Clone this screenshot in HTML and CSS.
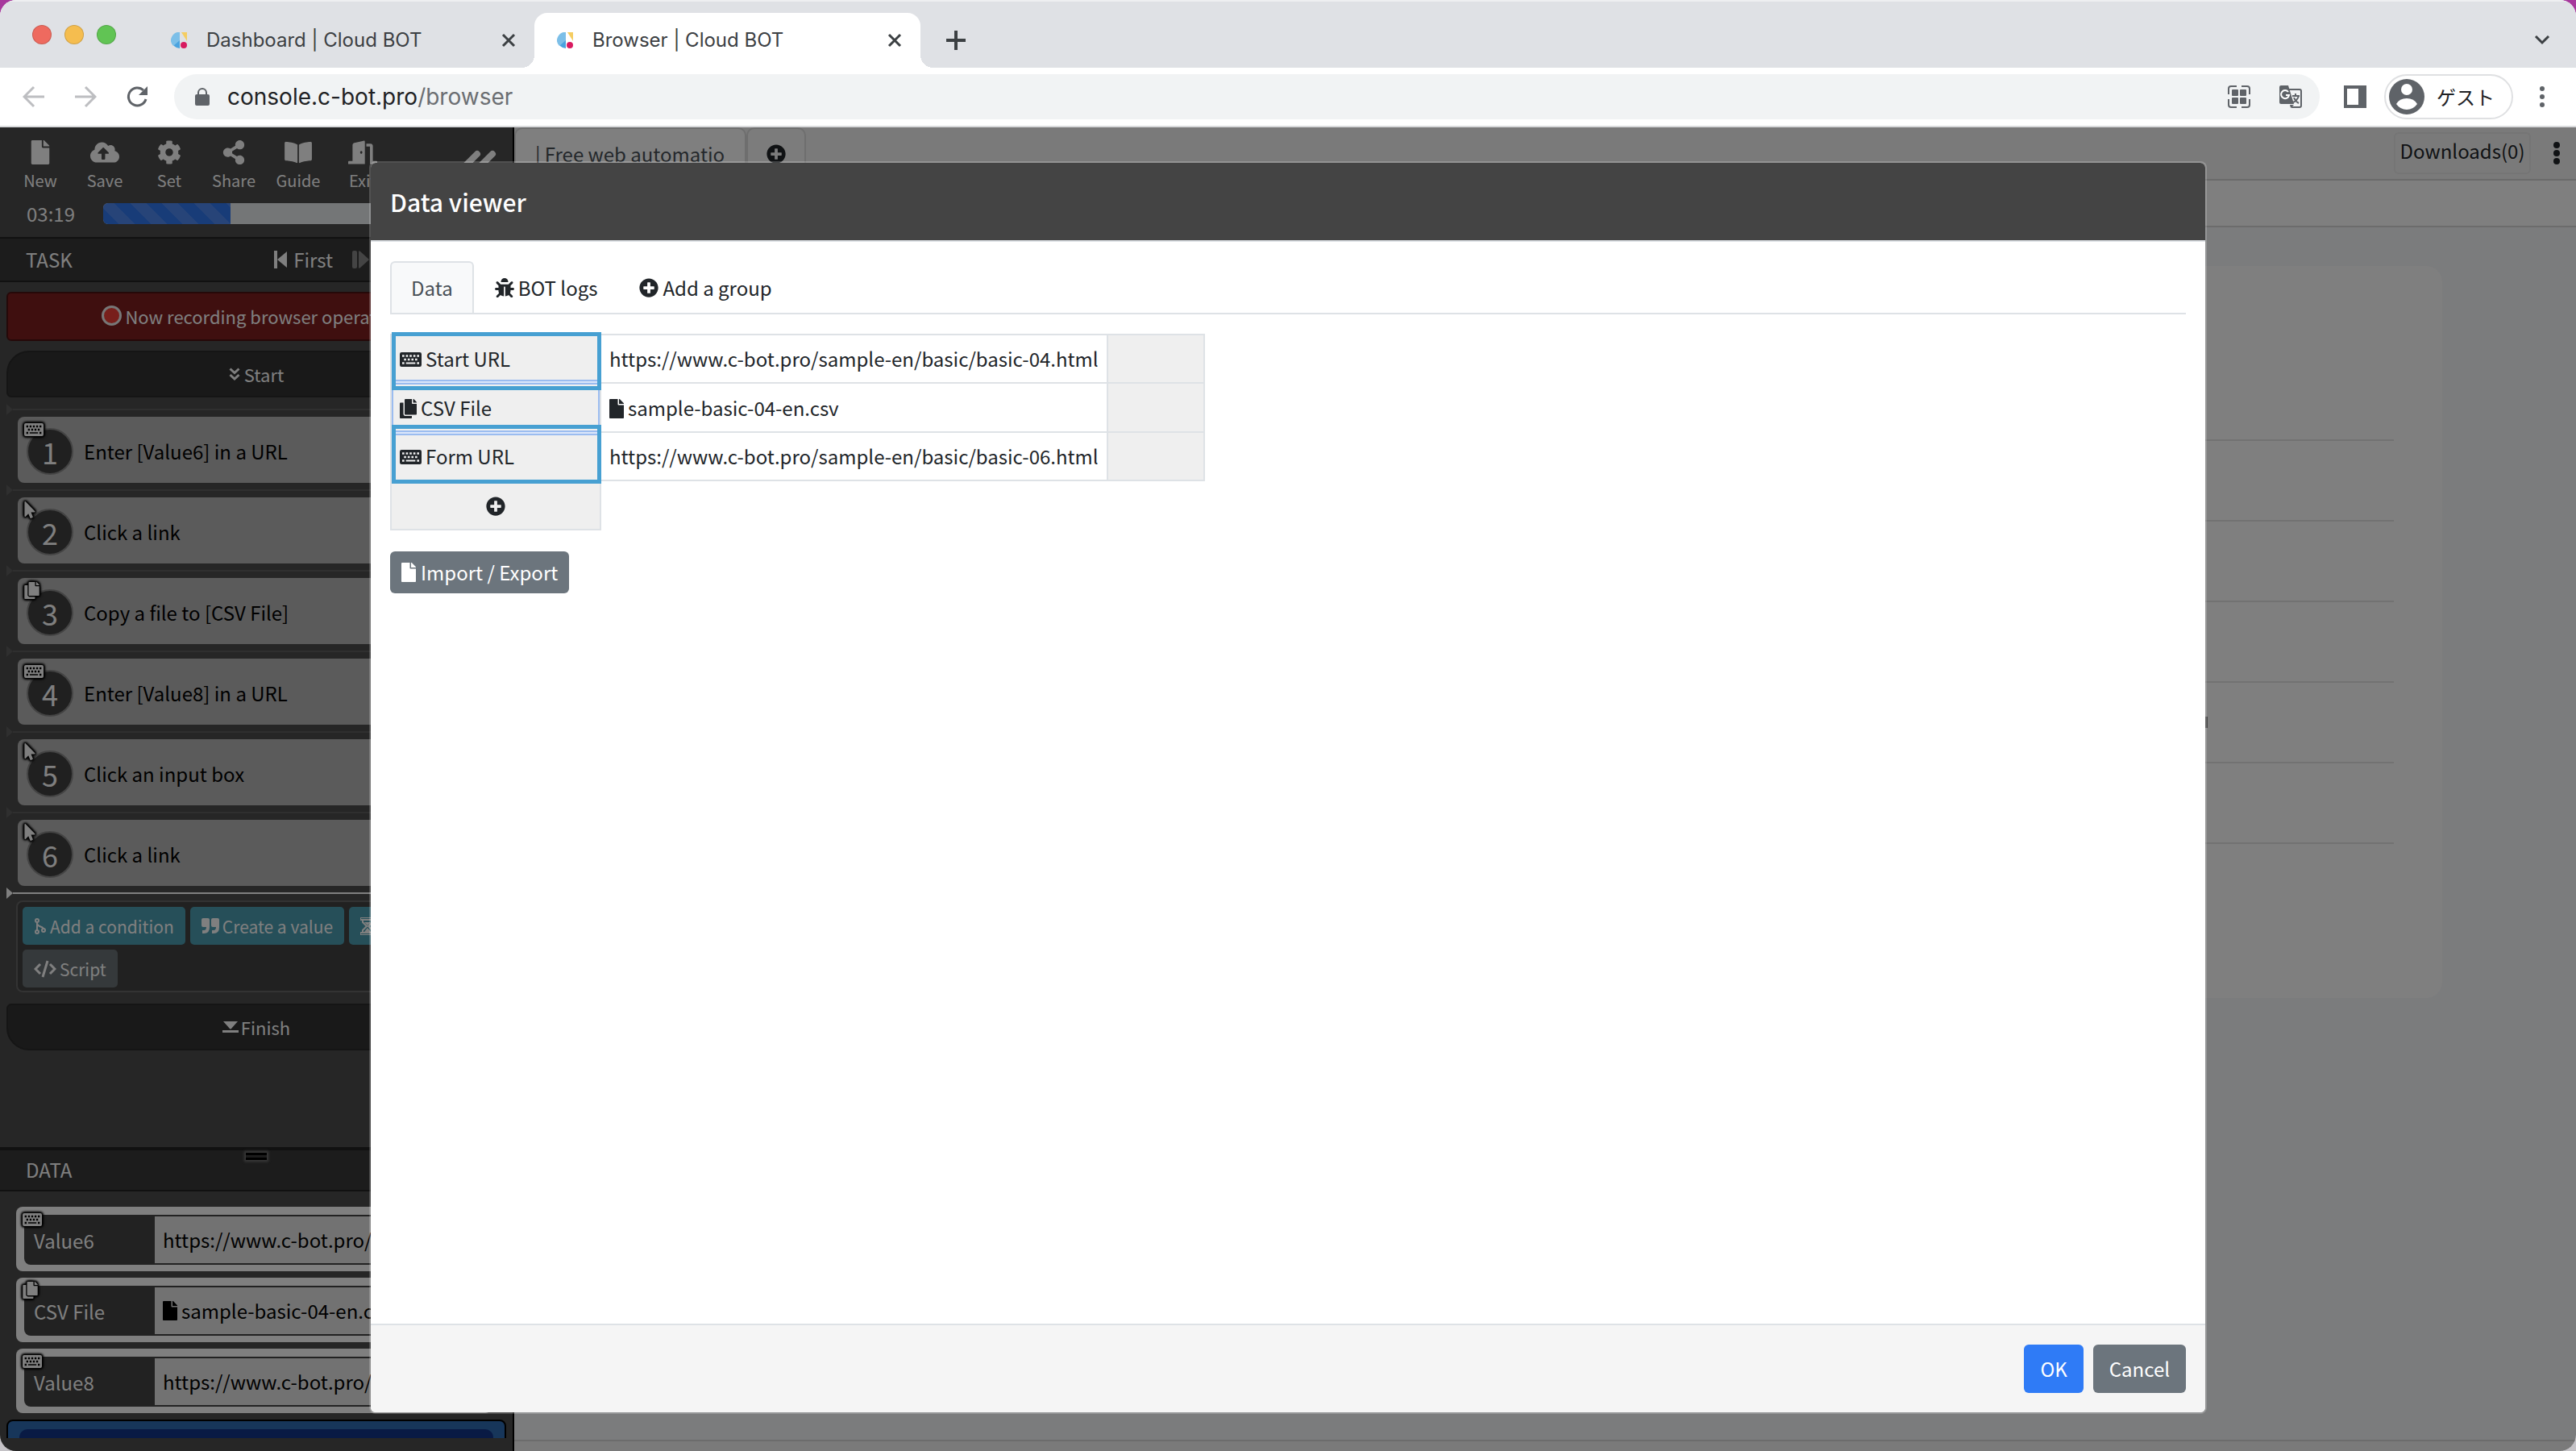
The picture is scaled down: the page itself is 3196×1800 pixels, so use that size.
FILE: index.html
```html
<!DOCTYPE html>
<html lang="en">
<head>
    <meta charset="UTF-8">
    <meta name="viewport" content="width=device-width, initial-scale=1.0">
    <title>Browser | Cloud BOT</title>
    <link rel="stylesheet" href="styles.css">
</head>
<body>
    <!-- Icon set -->
    <svg class="defs" aria-hidden="true">
        <symbol id="i-file" viewBox="0 0 384 512"><path d="M224 136V0H24C10.700 0 0 10.700 0 24v464c0 13.300 10.700 24 24 24h336c13.300 0 24-10.700 24-24V160H248c-13.200 0-24-10.800-24-24zm160-14.100v6.100H256V0h6.100c6.400 0 12.500 2.500 17 7l97.900 98c4.500 4.500 7 10.600 7 16.900z"/></symbol>
        <symbol id="i-copy" viewBox="0 0 448 512"><path d="M320 448v40c0 13.255-10.745 24-24 24H24c-13.255 0-24-10.745-24-24V120c0-13.255 10.745-24 24-24h72v296c0 30.879 25.121 56 56 56h168zm0-344V0H152c-13.255 0-24 10.745-24 24v368c0 13.255 10.745 24 24 24h272c13.255 0 24-10.745 24-24V128H344c-13.200 0-24-10.800-24-24zm120.971-31.029L375.029 7.029A24 24 0 0 0 358.059 0H352v96h96v-6.059a24 24 0 0 0-7.029-16.970z"/></symbol>
        <symbol id="i-keyboard" viewBox="0 0 576 384"><path fill-rule="evenodd" d="M48 0h480a48 48 0 0 1 48 48v288a48 48 0 0 1-48 48H48a48 48 0 0 1-48-48V48A48 48 0 0 1 48 0zM64 68v56h56V68zM162 68v56h56V68zM260 68v56h56V68zM358 68v56h56V68zM456 68v56h56V68zM112 164v56h56v-56zM210 164v56h56v-56zM308 164v56h56v-56zM406 164v56h56v-56zM64 260v56h56v-56zM164 268v40h248v-40zM456 260v56h56v-56z"/></symbol>
        <symbol id="i-pointer" viewBox="0 0 320 512"><path d="M302.189 329.126H196.105l55.831 135.993c3.889 9.428-.555 19.999-9.444 23.999l-49.165 21.427c-9.165 4-19.443-.571-23.332-9.714l-53.053-129.136-86.664 89.138C18.729 472.710 0 463.554 0 447.977V18.299C0 1.899 19.921-6.096 30.277 5.443l284.412 292.542c11.472 11.179 3.007 31.141-12.500 31.141z"/></symbol>
        <symbol id="i-plus" viewBox="0 0 512 512"><path d="M256 8C119 8 8 119 8 256s111 248 248 248 248-111 248-248S393 8 256 8zm144 276c0 6.600-5.400 12-12 12h-92v92c0 6.600-5.400 12-12 12h-56c-6.600 0-12-5.400-12-12v-92h-92c-6.600 0-12-5.400-12-12v-56c0-6.600 5.400-12 12-12h92v-92c0-6.600 5.400-12 12-12h56c6.600 0 12 5.400 12 12v92h92c6.600 0 12 5.400 12 12v56z"/></symbol>
        <symbol id="i-cloud" viewBox="0 0 640 512"><path d="M537.600 226.600c4.100-10.700 6.400-22.400 6.400-34.600 0-53-43-96-96-96-19.700 0-38.100 6-53.300 16.200C367 64.200 315.300 32 256 32c-88.400 0-160 71.600-160 160 0 2.700.1 5.400.2 8.100C40.200 219.800 0 273.200 0 336c0 79.500 64.500 144 144 144h368c70.700 0 128-57.300 128-128 0-61.900-44-113.600-102.400-125.400zM393.400 288H328v112c0 8.800-7.200 16-16 16h-48c-8.800 0-16-7.200-16-16V288h-65.400c-14.300 0-21.400-17.200-11.300-27.300l105.400-105.400c6.200-6.200 16.400-6.200 22.600 0l105.400 105.400c10.100 10.100 2.900 27.300-11.300 27.300z"/></symbol>
        <symbol id="i-cog" viewBox="0 0 512 512"><path d="M487.400 315.700l-42.600-24.600c4.300-23.200 4.300-47 0-70.200l42.600-24.600c4.900-2.800 7.100-8.600 5.500-14-11.100-35.600-30-67.800-54.700-94.600-3.800-4.100-10-5.100-14.800-2.300L380.800 110c-17.900-15.400-38.500-27.300-60.800-35.100V25.800c0-5.600-3.900-10.500-9.400-11.700-36.700-8.200-74.300-7.800-109.200 0-5.500 1.200-9.400 6.100-9.400 11.700V75c-22.200 7.900-42.800 19.800-60.800 35.100L88.700 85.500c-4.900-2.800-11-1.900-14.800 2.300-24.700 26.700-43.600 58.900-54.700 94.600-1.700 5.400.6 11.200 5.500 14L67.300 221c-4.300 23.200-4.300 47 0 70.200l-42.600 24.600c-4.900 2.800-7.100 8.600-5.500 14 11.100 35.600 30 67.800 54.700 94.600 3.800 4.100 10 5.100 14.800 2.300l42.600-24.600c17.900 15.400 38.500 27.300 60.800 35.100v49.200c0 5.600 3.900 10.500 9.400 11.700 36.700 8.200 74.300 7.800 109.200 0 5.500-1.200 9.400-6.100 9.400-11.700v-49.200c22.200-7.900 42.800-19.800 60.800-35.100l42.600 24.600c4.900 2.800 11 1.900 14.800-2.300 24.700-26.700 43.600-58.900 54.700-94.600 1.500-5.500-.7-11.300-5.600-14.100zM256 336c-44.100 0-80-35.900-80-80s35.900-80 80-80 80 35.900 80 80-35.900 80-80 80z"/></symbol>
        <symbol id="i-share" viewBox="0 0 448 512"><path d="M352 320c-22.608 0-43.387 7.819-59.790 20.895l-102.486-64.054a96.551 96.551 0 0 0 0-41.683l102.486-64.054C308.613 184.181 329.392 192 352 192c53.019 0 96-42.981 96-96S405.019 0 352 0s-96 42.981-96 96c0 7.158.79 14.130 2.276 20.841L155.790 180.895C139.387 167.819 118.608 160 96 160c-53.019 0-96 42.981-96 96s42.981 96 96 96c22.608 0 43.387-7.819 59.790-20.895l102.486 64.054A96.301 96.301 0 0 0 256 416c0 53.019 42.981 96 96 96s96-42.981 96-96-42.981-96-96-96z"/></symbol>
        <symbol id="i-book" viewBox="0 0 576 512"><path d="M542 32c-55 3-164 14-232 56-5 3-7 8-7 13v364c0 12 12 19 23 14 70-35 171-45 221-47 17-1 30-15 30-31V63c0-18-16-32-35-31zM267 88C199 46 90 35 35 32 16 31 0 45 0 63v338c0 16 13 30 30 31 50 2 151 12 221 47 10 5 22-2 22-14V101c0-5-2-10-6-13z"/></symbol>
        <symbol id="i-door" viewBox="0 0 640 512"><path fill-rule="evenodd" d="M16 448h80V95c0-25 18-43 40-49L338 1c16-4 30 7 30 22v489H0v-48c0-9 7-16 16-16zm272-224c-13 0-24 14-24 32s11 32 24 32 24-14 24-32-11-32-24-32zM400 64h96c26 0 48 22 48 49v335h80c9 0 16 7 16 16v48H480V128h-80z"/></symbol>
        <symbol id="i-bug" viewBox="0 0 512 512"><path d="M256 0a96 96 0 0 1 96 96v8H160v-8a96 96 0 0 1 96-96zM512 290c-1 17-15 30-32 30h-64v16c0 22-5 44-14 63l64 64c12 12 12 33 0 45s-33 12-45 0l-58-58c-25 19-56 30-90 30h1V236c0-7-5-12-12-12h-12c-7 0-12 5-12 12v244c-34 0-65-11-90-30l-58 58c-12 12-33 12-45 0s-12-33 0-45l64-64c-9-19-14-41-14-63v-16H32c-17 0-31-13-32-30-1-18 14-34 32-34h64v-59l-55-55c-12-12-12-33 0-45s33-12 45 0l68 67h204l68-67c12-12 33-12 45 0s12 33 0 45l-55 55v59h64c18 0 33 16 32 34z"/></symbol>
        <symbol id="i-angles-down" viewBox="0 0 28 34"><path d="M3 4l11 10L25 4M3 19l11 10 11-10" fill="none" stroke="currentColor" stroke-width="6"/></symbol>
        <symbol id="i-angles-left" viewBox="0 0 46 40"><path d="M22 5L7 20l15 15M41 5L26 20l15 15" fill="none" stroke="currentColor" stroke-width="8" stroke-linecap="round"/></symbol>
        <symbol id="i-first" viewBox="0 0 16 22"><path d="M0 0h4v22H0zM16 1v20L4 11z"/></symbol>
        <symbol id="i-next" viewBox="0 0 21 22"><rect width="6" height="22" rx="2"/><path d="M8 1c0-1 1-1 2 0l10 9c1 1 1 1 0 2l-10 9c-1 1-2 1-2 0z"/></symbol>
        <symbol id="i-branch" viewBox="0 0 16 22"><path d="M4 6v10M4 7c0 6 8 3 8 8" fill="none" stroke="currentColor" stroke-width="2"/><g fill="none" stroke="currentColor" stroke-width="2"><circle cx="4" cy="4" r="2"/><circle cx="4" cy="18" r="2"/><circle cx="12" cy="16" r="2"/></g></symbol>
        <symbol id="i-quote" viewBox="0 0 22 20"><path d="M2 0h6q2 0 2 2v9q0 8-7 8H1v-4h2q3 0 3-4H2q-2 0-2-2V2q0-2 2-2zM14 0h6q2 0 2 2v9q0 8-7 8h-2v-4h2q3 0 3-4h-4q-2 0-2-2V2q0-2 2-2z"/></symbol>
        <symbol id="i-hourglass" viewBox="0 0 18 22"><path d="M0 0h18v3H0zM0 19h18v3H0zM3 3v3l5 5-5 5v3M15 3v3l-5 5 5 5v3" fill="none" stroke="currentColor" stroke-width="2"/><path d="M5 18l4-5 4 5zM5 6h8l-4 4z"/></symbol>
        <symbol id="i-code" viewBox="0 0 28 22"><path d="M8 5L2 11l6 6M20 5l6 6-6 6M17 1l-6 20" fill="none" stroke="currentColor" stroke-width="3"/></symbol>
        <symbol id="i-finish" viewBox="0 0 20 14"><path d="M1 0h18l-8 9q-1 1-2 0zM0 11h20v3H0z"/></symbol>
        <symbol id="i-favicon" viewBox="0 0 20 20"><path d="M11 0v20A10 10 0 0 1 11 0z" fill="#4aa3df"/><path d="M11 0v10L3 17A10 10 0 0 1 11 0z" fill="#7cbfe8"/><path d="M13 0h7v11z" fill="#f5cd62"/><circle cx="16" cy="16" r="4" fill="#d81b60"/></symbol>
        <symbol id="i-close" viewBox="0 0 18 18"><path d="M2 2l14 14M16 2L2 16" stroke="currentColor" stroke-width="3"/></symbol>
    </svg>

    <div class="window">
        <!-- Tab strip -->
        <div class="tab-strip">
            <div class="lights"><span class="light red"></span><span class="light yellow"></span><span class="light green"></span></div>
            <div class="chrome-tab">
                <svg class="favicon"><use href="#i-favicon"/></svg>
                <span>Dashboard | Cloud BOT</span>
                <button class="tab-close" aria-label="Close tab"><svg><use href="#i-close"/></svg></button>
            </div>
            <div class="chrome-tab active">
                <svg class="favicon"><use href="#i-favicon"/></svg>
                <span>Browser | Cloud BOT</span>
                <button class="tab-close" aria-label="Close tab"><svg><use href="#i-close"/></svg></button>
            </div>
            <button class="new-tab" aria-label="New tab"><svg viewBox="0 0 24 24"><path d="M12 0v24M0 12h24" stroke="currentColor" stroke-width="4"/></svg></button>
            <button class="tab-search" aria-label="Search tabs"><svg viewBox="0 0 20 12"><path d="M2 1l8 8 8-8" fill="none" stroke="currentColor" stroke-width="3"/></svg></button>
        </div>

        <!-- Address bar -->
        <div class="toolbar">
            <button class="nav-btn off" aria-label="Back"><svg viewBox="0 0 28 28"><path d="M27 14H3M14 2L2 14l12 12" fill="none" stroke="currentColor" stroke-width="3"/></svg></button>
            <button class="nav-btn off" aria-label="Forward"><svg viewBox="0 0 28 28"><path d="M1 14h24M14 2l12 12-12 12" fill="none" stroke="currentColor" stroke-width="3"/></svg></button>
            <button class="nav-btn" aria-label="Reload"><svg viewBox="0 0 28 28"><path d="M25 17A11 11 0 1 1 22 6" fill="none" stroke="currentColor" stroke-width="3"/><path d="M27 1v11H16z"/></svg></button>
            <div class="omnibox">
                <svg class="lock" viewBox="0 0 18 22"><rect y="8" width="18" height="14" rx="2"/><path d="M4 9V6a5 5 0 0 1 10 0v3" fill="none" stroke="currentColor" stroke-width="2"/></svg>
                <span class="url">console.c-bot.pro<span class="path">/browser</span></span>
                <svg class="tool" viewBox="0 0 28 28"><path d="M1 11V4q0-3 3-3h7M17 1h7q3 0 3 3v7M27 17v7q0 3-3 3h-7M11 27H4q-3 0-3-3v-7" fill="none" stroke="currentColor" stroke-width="2"/><rect x="5" y="5" width="8" height="8" rx="1"/><rect x="15" y="5" width="8" height="8" rx="1"/><rect x="5" y="15" width="8" height="8" rx="1"/><rect x="15" y="15" width="8" height="8" rx="1"/></svg>
                <svg class="tool" viewBox="0 0 28 28"><path d="M12 5h13q2 0 2 2v18q0 2-2 2H15" fill="none" stroke="currentColor" stroke-width="2"/><path d="M2 0h9l7 23H2q-2 0-2-2V2q0-2 2-2zM13 24h5l-4 4z"/><path d="M11 8a5 5 0 1 0 1 4H8" fill="none" stroke="#fff" stroke-width="2"/><path d="M16 13h9M20 10v3M24 13q-2 6-7 8M18 15q2 5 6 7" fill="none" stroke="currentColor" stroke-width="2"/></svg>
            </div>
            <button class="side-btn" aria-label="Side panel"><svg viewBox="0 0 28 28"><path fill-rule="evenodd" d="M0 0h28v28H0zM4 4v20h14V4z"/></svg></button>
            <button class="profile">
                <svg viewBox="0 0 44 44"><circle cx="22" cy="22" r="22"/><circle cx="22" cy="13" r="7" fill="#fff"/><path d="M9 31q4-7 13-7t13 7q-5 7-13 7T9 31z" fill="#fff"/></svg>
                <span>ゲスト</span>
            </button>
            <button class="kebab" aria-label="Menu"><svg viewBox="0 0 8 28"><circle cx="4" cy="4" r="3"/><circle cx="4" cy="14" r="3"/><circle cx="4" cy="24" r="3"/></svg></button>
        </div>

        <div class="app">
            <!-- BOT editor -->
            <aside class="sidebar">
                <div class="menu">
                    <div class="menu-row">
                        <button class="menu-item"><svg><use href="#i-file"/></svg>New</button>
                        <button class="menu-item"><svg><use href="#i-cloud"/></svg>Save</button>
                        <button class="menu-item"><svg><use href="#i-cog"/></svg>Set</button>
                        <button class="menu-item"><svg><use href="#i-share"/></svg>Share</button>
                        <button class="menu-item"><svg><use href="#i-book"/></svg>Guide</button>
                        <button class="menu-item"><svg><use href="#i-door"/></svg>Exit</button>
                        <button class="collapse" aria-label="Collapse"><svg><use href="#i-angles-left"/></svg></button>
                    </div>
                    <div class="time-row">
                        <span>03:19</span>
                        <div class="progress"><div class="progress-bar" style="width: 32.5%"></div></div>
                    </div>
                </div>

                <div class="panel-head">
                    <h2>TASK</h2>
                    <button class="first"><svg><use href="#i-first"/></svg>First</button>
                    <button class="next" aria-label="Next"><svg><use href="#i-next"/></svg></button>
                </div>
                <div class="task">
                    <div class="recording"><span class="rec-dot"></span>Now recording browser operations</div>
                    <div class="cap start"><svg class="i-14"><use href="#i-angles-down"/></svg>Start</div>
                    <ol class="steps">
                        <li><div class="sep"></div><div class="step"><svg class="badge kb"><use href="#i-keyboard"/></svg><span class="num">1</span>Enter [Value6] in a URL</div></li>
                        <li><div class="sep"></div><div class="step"><svg class="badge ptr"><use href="#i-pointer"/></svg><span class="num">2</span>Click a link</div></li>
                        <li><div class="sep"></div><div class="step"><svg class="badge cp"><use href="#i-copy"/></svg><span class="num">3</span>Copy a file to [CSV File]</div></li>
                        <li><div class="sep"></div><div class="step"><svg class="badge kb"><use href="#i-keyboard"/></svg><span class="num">4</span>Enter [Value8] in a URL</div></li>
                        <li><div class="sep"></div><div class="step"><svg class="badge ptr"><use href="#i-pointer"/></svg><span class="num">5</span>Click an input box</div></li>
                        <li><div class="sep"></div><div class="step"><svg class="badge ptr"><use href="#i-pointer"/></svg><span class="num">6</span>Click a link</div></li>
                    </ol>
                    <div class="sep current"></div>
                    <div class="add-box">
                        <button class="btn-add"><svg class="i-16"><use href="#i-branch"/></svg>Add a condition</button>
                        <button class="btn-add"><svg class="i-22"><use href="#i-quote"/></svg>Create a value</button>
                        <button class="btn-add"><svg class="i-18"><use href="#i-hourglass"/></svg>Wait</button>
                        <button class="btn-add script"><svg class="i-28"><use href="#i-code"/></svg>Script</button>
                    </div>
                    <div class="cap finish"><svg class="i-20"><use href="#i-finish"/></svg>Finish</div>
                </div>

                <div class="data">
                    <div class="panel-head"><h2>DATA</h2><span class="handle"></span></div>
                    <div class="data-list">
                        <div class="datum"><svg class="badge kb"><use href="#i-keyboard"/></svg><label for="value6">Value6</label><input id="value6" value="https://www.c-bot.pro/sample-en/basic/basic-04.html"></div>
                        <div class="datum"><svg class="badge cp"><use href="#i-copy"/></svg><span class="datum-name">CSV File</span><span class="datum-file"><svg class="i-file"><use href="#i-file"/></svg>sample-basic-04-en.csv</span></div>
                        <div class="datum"><svg class="badge kb"><use href="#i-keyboard"/></svg><label for="value8">Value8</label><input id="value8" value="https://www.c-bot.pro/sample-en/basic/basic-06.html"></div>
                        <div class="output"><div class="output-inner"></div></div>
                    </div>
                </div>
            </aside>

            <!-- Remote browser -->
            <main class="remote">
                <div class="remote-tabs">
                    <div class="remote-tab">| Free web automatio</div>
                    <button class="remote-tab add" aria-label="New tab"><svg class="i-24"><use href="#i-plus"/></svg></button>
                    <button class="downloads">Downloads(0)</button>
                    <button class="more" aria-label="More"><svg viewBox="0 0 8 28"><circle cx="4" cy="4" r="4"/><circle cx="4" cy="14" r="4"/><circle cx="4" cy="24" r="4"/></svg></button>
                </div>
                <div class="remote-bar"></div>
                <div class="remote-page">
                    <div class="card">
                        <div class="card-row head"></div>
                        <div class="card-row"></div>
                        <div class="card-row"></div>
                        <div class="card-row"></div>
                        <div class="card-row"><span class="mark"></span></div>
                        <div class="card-row"></div>
                    </div>
                </div>
                <div class="remote-foot"></div>
            </main>

            <!-- Data viewer -->
            <div class="backdrop">
                <div class="modal" role="dialog" aria-labelledby="modal-title">
                    <header class="modal-head"><h1 id="modal-title">Data viewer</h1></header>
                    <div class="modal-body">
                        <div class="tabs" role="tablist">
                            <button class="tab active" role="tab" aria-selected="true">Data</button>
                            <button class="tab" role="tab"><svg class="i-24"><use href="#i-bug"/></svg>BOT logs</button>
                            <button class="tab" role="tab"><svg class="i-24"><use href="#i-plus"/></svg>Add a group</button>
                        </div>
                        <table class="data-table">
                            <tr>
                                <th scope="row" class="marked"><svg class="i-kb"><use href="#i-keyboard"/></svg>Start URL</th>
                                <td>https://www.c-bot.pro/sample-en/basic/basic-04.html</td>
                                <td class="blank"></td>
                            </tr>
                            <tr>
                                <th scope="row" class="selected"><svg class="i-copy"><use href="#i-copy"/></svg>CSV File</th>
                                <td><svg class="i-file"><use href="#i-file"/></svg>sample-basic-04-en.csv</td>
                                <td class="blank"></td>
                            </tr>
                            <tr>
                                <th scope="row" class="marked"><svg class="i-kb"><use href="#i-keyboard"/></svg>Form URL</th>
                                <td>https://www.c-bot.pro/sample-en/basic/basic-06.html</td>
                                <td class="blank"></td>
                            </tr>
                            <tr>
                                <th class="add-row"><button aria-label="Add"><svg class="i-24"><use href="#i-plus"/></svg></button></th>
                            </tr>
                        </table>
                        <button class="btn btn-sm"><svg class="i-file"><use href="#i-file"/></svg>Import / Export</button>
                    </div>
                    <footer class="modal-foot">
                        <button class="btn btn-primary">OK</button>
                        <button class="btn">Cancel</button>
                    </footer>
                </div>
            </div>
        </div>
    </div>
</body>
</html>
```

FILE: styles.css
```css
* {
    box-sizing: border-box;
}
body {
    margin: 0;
    height: 100vh;
    background: linear-gradient(#a6389c, #c4c2c6);
    font-family: "Noto Sans CJK JP", "Noto Sans", sans-serif;
    font-size: 24px;
    line-height: 36px;
    color: #212529;
}
h1, h2, ol {
    margin: 0;
    padding: 0;
    font-weight: 400;
}
button {
    padding: 0;
    border: none;
    background: none;
    color: inherit;
    font: inherit;
    cursor: pointer;
}
svg {
    display: block;
    flex: none;
    fill: currentColor;
}
.defs {
    position: absolute;
    width: 0;
    height: 0;
}
.i-14 { width: 14px; height: 18px; }
.i-16 { width: 16px; height: 22px; }
.i-18 { width: 18px; height: 22px; }
.i-20 { width: 20px; height: 14px; }
.i-22 { width: 22px; height: 20px; }
.i-24 { width: 24px; height: 24px; }
.i-28 { width: 28px; height: 22px; }
.i-kb { width: 27px; height: 18px; }
.i-copy { width: 21px; height: 24px; }
.i-file { width: 18px; height: 24px; }

.window {
    display: flex;
    flex-direction: column;
    height: 100%;
    border-radius: 20px;
    overflow: hidden;
    background: #fff;
}

/* Tab strip */
.tab-strip {
    display: flex;
    align-items: flex-end;
    height: 84px;
    flex: none;
    padding: 0 32px 0 40px;
    border-top: 2px solid #eeeff1;
    background: #dfe1e5;
    color: #3c4043;
    font-family: Inter, sans-serif;
    font-size: 24px;
}
.lights {
    display: flex;
    gap: 16px;
    width: 144px;
    padding-bottom: 29px;
}
.light {
    width: 24px;
    height: 24px;
    border-radius: 50%;
    border: 1px solid rgba(0, 0, 0, .15);
}
.red { background: #ee6a5f; }
.yellow { background: #f5bd4f; }
.green { background: #61c454; }
.chrome-tab {
    position: relative;
    display: flex;
    align-items: center;
    width: 479px;
    height: 68px;
    padding: 0 23px 0 28px;
    border-radius: 16px 16px 0 0;
}
.chrome-tab span {
    flex: 1;
}
.chrome-tab.active {
    background: #fff;
}
.chrome-tab.active::before,
.chrome-tab.active::after {
    content: "";
    position: absolute;
    bottom: 0;
    width: 16px;
    height: 16px;
}
.chrome-tab.active::before {
    right: 100%;
    background: radial-gradient(circle at 0 0, transparent 16px, #fff 16px);
}
.chrome-tab.active::after {
    left: 100%;
    background: radial-gradient(circle at 100% 0, transparent 16px, #fff 16px);
}
.favicon {
    width: 20px;
    height: 20px;
    margin-right: 24px;
}
.tab-close svg {
    width: 18px;
    height: 18px;
}
.new-tab {
    margin: 0 auto 22px 32px;
}
.new-tab svg {
    width: 24px;
    height: 24px;
}
.tab-search {
    margin-bottom: 28px;
}
.tab-search svg {
    width: 20px;
    height: 12px;
}

/* Address bar */
.toolbar {
    display: flex;
    align-items: center;
    height: 74px;
    flex: none;
    padding: 0 38px 0 28px;
    border-bottom: 2px solid #d9dadc;
    color: #5f6368;
}
.nav-btn {
    margin-right: 36px;
}
.nav-btn svg, .side-btn svg, .tool {
    width: 28px;
    height: 28px;
}
.nav-btn.off {
    color: #bdbec1;
}
.omnibox {
    display: flex;
    align-items: center;
    flex: 1;
    height: 56px;
    margin-left: -4px;
    padding: 0 22px 0 26px;
    border-radius: 28px;
    background: #f1f3f4;
}
.lock {
    width: 18px;
    height: 22px;
    margin-right: 22px;
}
.url {
    flex: 1;
    color: #202124;
    font-family: Inter, sans-serif;
    font-size: 28px;
}
.path {
    color: #6b6e72;
}
.tool + .tool {
    margin-left: 36px;
}
.side-btn {
    margin: 0 22px 0 30px;
}
.profile {
    display: flex;
    align-items: center;
    gap: 15px;
    width: 160px;
    height: 56px;
    padding-left: 4px;
    border: 2px solid #dfe0e2;
    border-radius: 28px;
}
.profile svg {
    width: 44px;
    height: 44px;
}
.profile span {
    color: #202124;
}
.kebab {
    margin-left: 32px;
}
.kebab svg, .more svg {
    width: 8px;
    height: 28px;
}

.app {
    position: relative;
    display: flex;
    flex: 1;
    min-height: 0;
}

/* BOT editor */
.sidebar {
    display: flex;
    flex-direction: column;
    width: 638px;
    flex: none;
    border-right: 2px solid #000;
    background: #4c4c4c;
    color: #fff;
}
.menu {
    padding: 16px 8px 16px 10px;
    border-bottom: 2px solid #222;
}
.menu-row {
    display: flex;
}
.menu-item {
    display: flex;
    flex-direction: column;
    align-items: center;
    gap: 6px;
    width: 80px;
    font-size: 20px;
    line-height: 28px;
}
.menu-item svg {
    width: 36px;
    height: 30px;
}
.collapse {
    align-self: flex-start;
    margin: 12px 12px 0 auto;
}
.collapse svg {
    width: 46px;
    height: 40px;
}
.time-row {
    display: flex;
    align-items: center;
    height: 26px;
    margin-top: 14px;
    padding-left: 23px;
}
.time-row span {
    width: 95px;
}
.progress {
    flex: 1;
    height: 26px;
    margin-right: 14px;
    border-radius: 6px;
    overflow: hidden;
    background: #e9ecef;
}
.progress-bar {
    height: 100%;
    background: repeating-linear-gradient(45deg, #3078f0 0 14px, #4e88f0 14px 28px);
}
.panel-head {
    position: relative;
    display: flex;
    align-items: center;
    height: 54px;
    flex: none;
    padding: 0 8px 0 32px;
    border-bottom: 2px solid #222;
    background: #383838;
}
.panel-head h2 {
    font-size: 24px;
}
.first {
    display: flex;
    align-items: center;
    gap: 8px;
    margin: 0 24px 0 auto;
}
.first svg {
    width: 16px;
    height: 22px;
}
.next {
    margin-right: 170px;
    color: #888;
}
.next svg {
    width: 21px;
    height: 22px;
}
.task {
    flex: 1;
    min-height: 0;
    padding: 12px 8px;
    overflow: hidden;
}
.recording {
    display: flex;
    align-items: center;
    justify-content: center;
    gap: 4px;
    height: 61px;
    margin-bottom: 12px;
    padding-bottom: 2px;
    border: 2px solid #4a1212;
    border-radius: 6px;
    background: #7e1e1e;
    font-size: 22px;
}
.rec-dot {
    width: 25px;
    height: 25px;
    border: 3px solid #eee;
    border-radius: 50%;
    background: #f03e36;
}
.cap {
    display: flex;
    align-items: center;
    justify-content: center;
    gap: 5px;
    height: 58px;
    border: 2px solid #2a2a2a;
    background: #323232;
    font-size: 22px;
}
.start {
    margin-bottom: 6px;
    border-radius: 28px 28px 6px 6px;
}
.finish {
    margin-top: 14px;
    gap: 3px;
    border-radius: 6px 6px 28px 28px;
}
.steps {
    list-style: none;
}
.sep {
    display: flex;
    align-items: center;
    height: 18px;
    color: #5e5e5e;
}
.sep::before {
    content: "";
    border: 7px solid transparent;
    border-left: 8px solid;
    border-right: 0;
}
.sep::after {
    content: "";
    flex: 1;
    height: 2px;
    background: currentColor;
}
.sep.current {
    color: #fff;
}
.step {
    position: relative;
    display: flex;
    align-items: center;
    gap: 13px;
    height: 82px;
    margin: 0 14px;
    padding: 3px 0 0 11px;
    border-radius: 8px;
    background: #b6b6b6;
    color: #000;
}
.num {
    display: flex;
    align-items: center;
    justify-content: center;
    width: 58px;
    height: 58px;
    border: 2px solid #888;
    border-radius: 50%;
    background: #404040;
    color: #fff;
    font-size: 36px;
}
.badge {
    position: absolute;
    left: 8px;
    top: 8px;
    color: #fff;
    overflow: visible;
    filter: drop-shadow(0 0 1px #000) drop-shadow(0 0 1px #000) drop-shadow(0 0 1px #000) drop-shadow(0 0 1px #000);
}
.badge.kb { width: 24px; height: 16px; }
.badge.ptr { width: 14px; height: 21px; top: 5px; }
.badge.cp { width: 19px; height: 21px; top: 5px; }
.add-box {
    display: flex;
    flex-wrap: wrap;
    gap: 6px;
    margin: 0 14px 0 12px;
    padding: 6px 0 4px 6px;
    border: 2px solid #666;
    border-radius: 8px;
    background: #424242;
}
.btn-add {
    display: flex;
    align-items: center;
    gap: 4px;
    height: 47px;
    padding: 0 14px;
    border-radius: 5px;
    background: #4c9eb2;
    font-size: 21px;
}
.script {
    background: #6a7276;
}

.data {
    display: flex;
    flex-direction: column;
    flex: none;
    height: 377px;
    padding-bottom: 16px;
    border-top: 4px solid #222;
}
.data .panel-head {
    height: 51px;
    padding-bottom: 2px;
}
.handle {
    position: absolute;
    left: 50%;
    top: 3px;
    width: 26px;
    height: 9px;
    margin-left: -13px;
    border: solid #000;
    border-width: 3px 0;
    box-shadow: 0 0 3px 2px #777;
}
.data-list {
    flex: 1;
    padding: 19px 8px 0;
    overflow: hidden;
}
.datum {
    position: relative;
    display: flex;
    height: 80px;
    margin: 0 18px 8px 12px;
    padding: 10px 10px 8px;
    border-radius: 8px;
    background: #fff;
}
.datum label, .datum-name {
    width: 162px;
    padding: 14px 12px;
    border-radius: 0 0 0 8px;
    background: #444;
}
.datum input, .datum-file {
    flex: 1;
    min-width: 0;
    padding: 0 10px;
    border: solid #444;
    border-width: 2px 0;
    background: #e4e4e4;
    color: #000;
    font: inherit;
}
.datum-file {
    display: flex;
    align-items: center;
    gap: 5px;
}
.datum .badge {
    left: 8px;
}
.output {
    height: 80px;
    padding: 10px 14px;
    border: 2px solid #000;
    border-radius: 8px;
    background: #2e6cb4;
}
.output-inner {
    height: 60px;
    border-radius: 10px;
    background: #123488;
}

/* Remote browser */
.remote {
    display: flex;
    flex-direction: column;
    flex: 1;
    background: #f5f5f5;
}
.remote-tabs {
    display: flex;
    height: 66px;
    border-bottom: 2px solid #d4d4d4;
}
.remote-tab {
    display: flex;
    align-items: center;
    width: 288px;
    padding-left: 24px;
    border: 2px solid #ddd;
    border-bottom: 0;
    border-radius: 10px 10px 0 0;
    background: #fff;
    color: #495057;
}
.remote-tab.add {
    width: 74px;
    padding: 0;
    justify-content: center;
    background: #f8f8f8;
    color: #212529;
}
.downloads {
    width: 170px;
    height: 52px;
    margin: 6px 28px 0 auto;
    padding-bottom: 6px;
    border: 2px solid #eaeaea;
    border-radius: 6px;
}
.more {
    margin-right: 20px;
}
.remote-bar {
    height: 58px;
    border-bottom: 2px solid #d8d8d8;
    background: #fff;
}
.remote-page {
    flex: 1;
    padding: 48px 166px;
    background: #f7f8fb;
}
.card {
    height: 908px;
    padding: 0 60px;
    border-radius: 20px;
    background: #fefefe;
}
.card-row {
    display: flex;
    align-items: center;
    justify-content: flex-end;
    height: 100px;
    border-bottom: 2px solid #e4e4e4;
}
.card-row.head {
    height: 217px;
}
.mark {
    width: 20px;
    height: 14px;
    margin-right: 231px;
    background: #888;
}
.remote-foot {
    height: 14px;
    border-top: 2px solid #d8d8d8;
}

/* Data viewer */
.backdrop {
    position: absolute;
    inset: 0;
    display: flex;
    justify-content: center;
    padding: 42px 0 46px;
    background: rgba(0, 0, 0, .5);
}
.modal {
    display: flex;
    flex-direction: column;
    width: 90%;
    max-width: 2280px;
    border: 2px solid rgba(255, 255, 255, .2);
    border-radius: 8px;
    background: #fff;
    background-clip: padding-box;
    overflow: hidden;
}
.modal-head {
    padding: 28px 24px;
    border-bottom: 2px solid #dee2e6;
    background: #444;
    color: #fff;
}
.modal-head h1 {
    font-size: 30px;
    line-height: 40px;
    font-weight: 500;
}
.modal-body {
    flex: 1;
    padding: 24px;
}
.tabs {
    display: flex;
    margin-bottom: 24px;
    border-bottom: 2px solid #dee2e6;
}
.tab {
    display: flex;
    align-items: center;
    gap: 5px;
    height: 64px;
    padding: 0 24px;
    border: 2px solid transparent;
    border-bottom: 0;
    border-radius: 6px 6px 0 0;
}
.tab.active {
    border-color: #dee2e6;
    background: #f8f9fa;
    color: #495057;
}
.data-table {
    border-collapse: collapse;
    margin-bottom: 26px;
}
.data-table th, .data-table td {
    position: relative;
    height: 60px;
    padding: 0 10px;
    border: 2px solid #dee2e6;
    text-align: left;
    font-weight: 400;
    white-space: nowrap;
}
.data-table th {
    width: 260px;
    background: #efefef;
}
.data-table th.selected {
    height: 61px;
}
.data-table .blank {
    width: 120px;
    background: #efefef;
}
.data-table svg {
    display: inline-block;
    margin-right: 5px;
    vertical-align: -3px;
}
.data-table .i-kb {
    vertical-align: 0;
}
.data-table .add-row {
    height: 61px;
    text-align: center;
}
.data-table .add-row svg {
    margin: 0;
}
/* frames and bands spill over the neighbouring rows */
.marked::after {
    content: "";
    position: absolute;
    inset: -4px -2px -10px 0;
    border: 5px solid #47a0d2;
    z-index: 2;
}
tr:nth-child(3) .marked::after {
    inset: -10px -2px -5px 0;
}
.selected::before {
    content: "";
    position: absolute;
    inset: -5px 0;
    border: 2px solid #9bbcf0;
    box-shadow: inset 0 2px #dbe6fa, inset 0 4px #9bbcf0, inset 0 -2px #dbe6fa, inset 0 -4px #9bbcf0;
    z-index: 1;
}
.btn {
    display: inline-flex;
    align-items: center;
    gap: 6px;
    height: 60px;
    padding: 0 20px;
    border-radius: 6px;
    background: #6c757d;
    color: #fff;
}
.btn-sm {
    height: 52px;
    padding: 0 14px;
}
.btn-primary {
    background: #2f7bf6;
}
.modal-foot {
    display: flex;
    justify-content: flex-end;
    gap: 12px;
    padding: 24px;
    border-top: 2px solid #dee2e6;
    background: #f5f5f5;
}
```
